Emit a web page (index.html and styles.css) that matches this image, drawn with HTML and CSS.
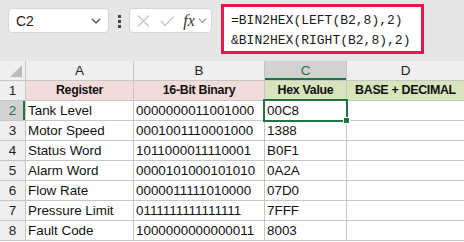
FILE: index.html
```html
<!DOCTYPE html>
<html lang="en">
<head>
<meta charset="UTF-8">
<meta name="viewport" content="width=device-width, initial-scale=1.0">
<title>BIN2HEX</title>
<link rel="stylesheet" href="styles.css">
</head>
<body>

<div class="toolbar">
  <div class="namebox">
    <span>C2</span>
    <svg width="12" height="8" viewBox="0 0 12 8"><path d="M2 2l4 4 4-4" fill="none" stroke="#444" stroke-width="1.2"/></svg>
  </div>
  <div class="dots"><i></i><i></i><i></i></div>
  <div class="fxbox">
    <svg width="14" height="14" viewBox="0 0 14 14"><path d="M1 1l12 12M13 1L1 13" stroke="#c4c4c4" stroke-width="1.3"/></svg>
    <svg width="16" height="12" viewBox="0 0 16 12"><path d="M1 6l4.5 5L15 1" fill="none" stroke="#c4c4c4" stroke-width="1.3"/></svg>
    <span class="fx">fx</span>
    <svg width="10" height="7" viewBox="0 0 10 7"><path d="M1 1.5l4 4 4-4" fill="none" stroke="#888" stroke-width="1.1"/></svg>
  </div>
  <div class="formula">=BIN2HEX(LEFT(B2,8),2)<br>&amp;BIN2HEX(RIGHT(B2,8),2)</div>
</div>

<div class="sheet">
  <div class="corner"><svg width="12" height="12" viewBox="0 0 12 12"><path d="M12 0V12H0z" fill="#bcbcbc"/></svg></div>
  <div class="colhead">A</div>
  <div class="colhead">B</div>
  <div class="colhead active">C</div>
  <div class="colhead">D</div>

  <div class="rowhead">1</div>
  <div class="cell title pink">Register</div>
  <div class="cell title pink">16-Bit Binary</div>
  <div class="cell title green">Hex Value</div>
  <div class="cell title green">BASE + DECIMAL</div>

  <div class="rowhead active">2</div>
  <div class="cell">Tank Level</div>
  <div class="cell">0000000011001000</div>
  <div class="cell selected">00C8<span class="handle"></span></div>
  <div class="cell"></div>

  <div class="rowhead">3</div>
  <div class="cell">Motor Speed</div>
  <div class="cell">0001001110001000</div>
  <div class="cell">1388</div>
  <div class="cell"></div>

  <div class="rowhead">4</div>
  <div class="cell">Status Word</div>
  <div class="cell">1011000011110001</div>
  <div class="cell">B0F1</div>
  <div class="cell"></div>

  <div class="rowhead">5</div>
  <div class="cell">Alarm Word</div>
  <div class="cell">0000101000101010</div>
  <div class="cell">0A2A</div>
  <div class="cell"></div>

  <div class="rowhead">6</div>
  <div class="cell">Flow Rate</div>
  <div class="cell">0000011111010000</div>
  <div class="cell">07D0</div>
  <div class="cell"></div>

  <div class="rowhead">7</div>
  <div class="cell">Pressure Limit</div>
  <div class="cell">0111111111111111</div>
  <div class="cell">7FFF</div>
  <div class="cell"></div>

  <div class="rowhead">8</div>
  <div class="cell">Fault Code</div>
  <div class="cell">1000000000000011</div>
  <div class="cell">8003</div>
  <div class="cell"></div>
</div>

</body>
</html>
```

FILE: styles.css
```css
body {
  margin: 0;
  background-color: #ffffff;
  font-family: "Liberation Sans", Arial, sans-serif;
  overflow: hidden;
}
.toolbar {
  display: flex;
  align-items: flex-start;
  height: 61px;
  background-color: #e6e6e6;
  box-sizing: border-box;
  padding-left: 8px;
}
.namebox {
  display: flex;
  align-items: center;
  justify-content: space-between;
  width: 101px;
  height: 25px;
  margin-top: 8px;
  padding: 0 6px 0 7px;
  box-sizing: border-box;
  background-color: #ffffff;
  border: 1px solid #d6d6d6;
  border-radius: 4px;
  font-size: 14px;
  color: #1a1a1a;
}
.dots {
  display: flex;
  flex-direction: column;
  gap: 2px;
  margin: 15px 8px 0 9px;
}
.dots i {
  display: block;
  width: 3px;
  height: 3px;
  background-color: #444;
}
.fxbox {
  display: flex;
  align-items: center;
  gap: 10px;
  width: 83px;
  height: 25px;
  margin-top: 8px;
  padding: 0 4px 0 7px;
  box-sizing: border-box;
  background-color: #ffffff;
  border: 1px solid #d6d6d6;
  border-radius: 4px;
}
.fx {
  font-family: "Liberation Serif", serif;
  font-style: italic;
  font-size: 16px;
  color: #333;
  margin-left: -1px;
  margin-right: -7px;
}
.formula {
  width: 203px;
  height: 50px;
  margin: 4px 0 0 9px;
  padding: 4px 0 0 7px;
  box-sizing: border-box;
  background-color: #ffffff;
  border: 3px solid #e3194c;
  font-family: "Liberation Mono", "DejaVu Sans Mono", monospace;
  font-size: 13px;
  line-height: 20px;
  color: #1a1a1a;
  white-space: nowrap;
}
.sheet {
  display: grid;
  grid-template-columns: 25px 107px 130px 81px 117px;
  grid-auto-rows: 19px;
  gap: 1px;
  padding-bottom: 1px;
  background-color: #c6c6c6;
  font-size: 13.4px;
  color: #111;
}
.corner {
  display: flex;
  align-items: flex-end;
  justify-content: flex-end;
  padding: 0 3px 3px 0;
  background-color: #efefef;
}
.colhead {
  background-color: #efefef;
  text-align: center;
  line-height: 19px;
  font-size: 13.5px;
  color: #222;
}
.colhead.active {
  background-color: #d2d2d2;
  color: #217346;
  box-shadow: inset 0 -2px 0 #217346;
}
.rowhead {
  background-color: #efefef;
  text-align: center;
  line-height: 19px;
  font-size: 13.5px;
  color: #222;
}
.rowhead.active {
  background-color: #d2d2d2;
  color: #217346;
  box-shadow: inset -2px 0 0 #217346;
}
.cell {
  position: relative;
  background-color: #ffffff;
  line-height: 19px;
  padding-left: 2px;
  white-space: nowrap;
  overflow: hidden;
}
.title {
  font-weight: bold;
  font-size: 12.4px;
  letter-spacing: -0.3px;
  text-align: center;
  padding-left: 0;
}
.pink {
  background-color: #f2dcdb;
}
.green {
  background-color: #d8e4bc;
}
.selected {
  overflow: visible;
  outline: 2px solid #217346;
  outline-offset: 0;
  z-index: 1;
}
.handle {
  position: absolute;
  right: -4px;
  bottom: -4px;
  width: 5px;
  height: 5px;
  background-color: #217346;
  border: 1px solid #ffffff;
}
```
